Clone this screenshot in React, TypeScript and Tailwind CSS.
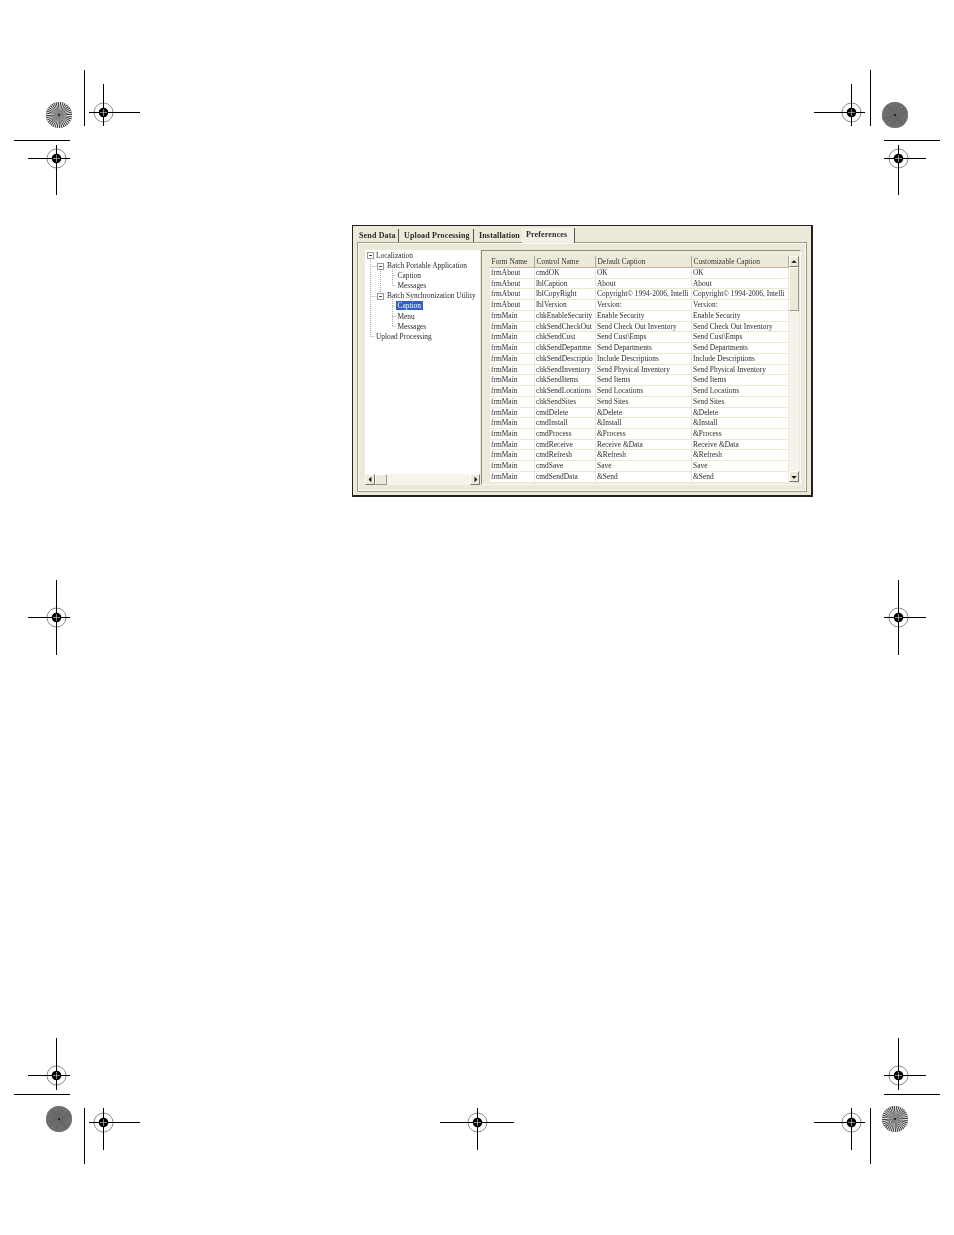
const rows: [string, string, string, string][] = [
  ["frmAbout", "cmdOK", "OK", "OK"],
  ["frmAbout", "lblCaption", "About", "About"],
  ["frmAbout", "lblCopyRight", "Copyright© 1994-2006, Intelli", "Copyright© 1994-2006, Intelli"],
  ["frmAbout", "lblVersion", "Version:", "Version:"],
  ["frmMain", "chkEnableSecurity", "Enable Security", "Enable Security"],
  ["frmMain", "chkSendCheckOut", "Send Check Out Inventory", "Send Check Out Inventory"],
  ["frmMain", "chkSendCust", "Send Cust\\Emps", "Send Cust\\Emps"],
  ["frmMain", "chkSendDepartme", "Send Departments", "Send Departments"],
  ["frmMain", "chkSendDescriptio", "Include Descriptions", "Include Descriptions"],
  ["frmMain", "chkSendInventory", "Send Physical Inventory", "Send Physical Inventory"],
  ["frmMain", "chkSendItems", "Send Items", "Send Items"],
  ["frmMain", "chkSendLocations", "Send Locations", "Send Locations"],
  ["frmMain", "chkSendSites", "Send Sites", "Send Sites"],
  ["frmMain", "cmdDelete", "&Delete", "&Delete"],
  ["frmMain", "cmdInstall", "&Install", "&Install"],
  ["frmMain", "cmdProcess", "&Process", "&Process"],
  ["frmMain", "cmdReceive", "Receive &Data", "Receive &Data"],
  ["frmMain", "cmdRefresh", "&Refresh", "&Refresh"],
  ["frmMain", "cmdSave", "Save", "Save"],
  ["frmMain", "cmdSendData", "&Send", "&Send"],
];

const tree: { label: string; indent: string; selected?: boolean }[] = [
  { label: "Localization", indent: "pl-[11px]" },
  { label: "Batch Portable Application", indent: "pl-[22px]" },
  { label: "Caption", indent: "pl-[32.5px]" },
  { label: "Messages", indent: "pl-[32.5px]" },
  { label: "Batch Synchronization Utility", indent: "pl-[22px]" },
  { label: "Caption", indent: "pl-[30.5px]", selected: true },
  { label: "Menu", indent: "pl-[32.5px]" },
  { label: "Messages", indent: "pl-[32.5px]" },
  { label: "Upload Processing", indent: "pl-[11px]" },
];

function Reg({ x, y, x1, x2, y1, y2 }: { x: number; y: number; x1: number; x2: number; y1: number; y2: number }) {
  return (
    <g>
      <circle cx={x} cy={y} r={9.5} fill="none" stroke="#8a8a8a" strokeWidth={1} />
      <circle cx={x} cy={y} r={4.8} fill="#000" />
      <line x1={x1} x2={x2} y1={y} y2={y} stroke="#000" strokeWidth={1} />
      <line x1={x} x2={x} y1={y1} y2={y2} stroke="#000" strokeWidth={1} />
      <line x1={x - 3.5} x2={x + 3.5} y1={y} y2={y} stroke="#fff" strokeWidth={0.5} />
      <line x1={x} x2={x} y1={y - 3.5} y2={y + 3.5} stroke="#fff" strokeWidth={0.5} />
    </g>
  );
}

function Burst({ x, y, n, bg, wedge }: { x: number; y: number; n: number; bg: string; wedge: string }) {
  const wedges = [];
  for (let i = 0; i < n; i++) {
    const a = (i / n) * Math.PI * 2;
    const b = ((i + 0.5) / n) * Math.PI * 2;
    const pts = `${x},${y} ${x + Math.cos(a) * 13},${y + Math.sin(a) * 13} ${x + Math.cos(b) * 13},${y + Math.sin(b) * 13}`;
    wedges.push(<polygon key={i} points={pts} fill={wedge} />);
  }
  return (
    <g>
      <circle cx={x} cy={y} r={13} fill={bg} />
      {wedges}
      <circle cx={x} cy={y} r={1} fill="#111" />
    </g>
  );
}

function PrintMarks() {
  const crops: [number, number, number, number][] = [
    [84.5, 70, 84.5, 126],
    [14, 140.5, 70, 140.5],
    [870.5, 70, 870.5, 126],
    [884, 140.5, 940, 140.5],
    [14, 1094.5, 70, 1094.5],
    [84.5, 1108, 84.5, 1164],
    [884, 1094.5, 940, 1094.5],
    [870.5, 1108, 870.5, 1164],
  ];
  return (
    <svg className="absolute left-0 top-0" width={954} height={1235} viewBox="0 0 954 1235">
      {crops.map((c, i) => (
        <line key={i} x1={c[0]} y1={c[1]} x2={c[2]} y2={c[3]} stroke="#000" strokeWidth={1} />
      ))}
      <Burst x={59} y={115} n={36} bg="#3a3a3a" wedge="#e4e4e4" />
      <Burst x={895} y={115} n={72} bg="#404040" wedge="#a0a0a0" />
      <Burst x={59} y={1119} n={72} bg="#404040" wedge="#a0a0a0" />
      <Burst x={895} y={1119} n={36} bg="#3a3a3a" wedge="#e4e4e4" />
      <Reg x={103.5} y={112.5} x1={89} x2={140} y1={84} y2={126} />
      <Reg x={56.5} y={158.5} x1={28} x2={70} y1={145} y2={195} />
      <Reg x={851.5} y={112.5} x1={814} x2={865} y1={84} y2={126} />
      <Reg x={898.5} y={158.5} x1={884} x2={926} y1={145} y2={195} />
      <Reg x={56.5} y={617.5} x1={28} x2={70} y1={580} y2={655} />
      <Reg x={898.5} y={617.5} x1={884} x2={926} y1={580} y2={655} />
      <Reg x={56.5} y={1075.5} x1={28} x2={70} y1={1038} y2={1090} />
      <Reg x={898.5} y={1075.5} x1={884} x2={926} y1={1038} y2={1090} />
      <Reg x={103.5} y={1122.5} x1={89} x2={140} y1={1108} y2={1150} />
      <Reg x={851.5} y={1122.5} x1={814} x2={865} y1={1108} y2={1150} />
      <Reg x={477.5} y={1122.5} x1={440} x2={514} y1={1108} y2={1150} />
    </svg>
  );
}

function TreeLines() {
  const dash = { stroke: "#aaa", strokeWidth: 1, strokeDasharray: "1 1" };
  return (
    <svg className="absolute left-0 top-[1px]" width={113} height={100} viewBox="0 0 113 100">
      <line x1={5.5} y1={7} x2={5.5} y2={85.5} {...dash} />
      <line x1={5.5} y1={85.5} x2={10} y2={85.5} {...dash} />
      <line x1={5.5} y1={15.5} x2={12} y2={15.5} {...dash} />
      <line x1={5.5} y1={45.5} x2={12} y2={45.5} {...dash} />
      <line x1={15.5} y1={18} x2={15.5} y2={44} {...dash} />
      <line x1={27.5} y1={18} x2={27.5} y2={34.5} {...dash} />
      <line x1={27.5} y1={24.5} x2={31.5} y2={24.5} {...dash} />
      <line x1={27.5} y1={34.5} x2={31.5} y2={34.5} {...dash} />
      <line x1={27.5} y1={48} x2={27.5} y2={75.5} {...dash} />
      <line x1={27.5} y1={55.5} x2={30} y2={55.5} {...dash} />
      <line x1={27.5} y1={65.5} x2={31.5} y2={65.5} {...dash} />
      <line x1={27.5} y1={75.5} x2={31.5} y2={75.5} {...dash} />
      {[
        [2, 1],
        [12, 12],
        [12, 42],
      ].map(([x, y]) => (
        <g key={`${x}-${y}`}>
          <rect x={x + 0.5} y={y + 0.5} width={6} height={6} fill="#fff" stroke="#999" strokeWidth={1} />
          <line x1={x + 2} x2={x + 5} y1={y + 3.5} y2={y + 3.5} stroke="#444" strokeWidth={1} />
        </g>
      ))}
    </svg>
  );
}

function ScrollBtn({ dir, className }: { dir: "up" | "down" | "left" | "right"; className: string }) {
  const pts = {
    up: "1.5,6 7.5,6 4.5,3",
    down: "1.5,4 7.5,4 4.5,7",
    left: "6,1.5 6,7.5 3,4.5",
    right: "4,1.5 4,7.5 7,4.5",
  }[dir];
  return (
    <div className={`bg-[#ece9d8] border border-t-white border-l-white border-r-[#777] border-b-[#777] flex items-center justify-center shrink-0 ${className}`}>
      <svg width={9} height={9} viewBox="0 0 9 9">
        <polygon points={pts} fill="#000" />
      </svg>
    </div>
  );
}

const track = "bg-[#f6f4ea] bg-[radial-gradient(#d8d5c4_0.6px,transparent_0.7px)] bg-[length:4px_4px]";

export default function App() {
  return (
    <div className="relative w-[954px] h-[1235px] bg-white pt-[225px] pl-[352px] overflow-hidden [font-family:'Liberation_Serif',serif] text-[#2a2a2a]">
      <PrintMarks />
      <div className="relative w-[461px] h-[272px] border border-[#222] border-b-2 border-r-2 bg-[#ece9d8] px-[4px] pt-[1px] flex flex-col">
        <div className="flex h-[15px] items-end text-[8px] font-bold leading-[12px] tracking-[0.15px] shrink-0 whitespace-nowrap">
          <div className="w-[42px] pl-[2px] pt-[1px] h-[13px] border-r border-[#555] blur-[0.3px]">Send Data</div>
          <div className="w-[75px] pl-[5px] pt-[1px] h-[13px] border-r border-[#555] blur-[0.3px]">Upload Processing</div>
          <div className="w-[48px] pl-[5px] pt-[1px] h-[13px] blur-[0.3px]">Installation</div>
          <div className="w-[53px] pl-[4px] pt-[1px] h-[15px] bg-[#f3f1e6] border-r border-[#555] -mb-px z-10 blur-[0.3px]">Preferences</div>
        </div>
        <div className="w-[450px] h-[250px] border border-[#9a9a8c] bg-[#ece9d8] p-[1px] shadow-[inset_0_0_0_1px_#fbfaf5]">
          <div className="flex h-full pl-[6px] pt-[6px] gap-[1px]">
            <div className="relative w-[115px] h-[235px] bg-white flex flex-col shrink-0">
              <TreeLines />
              <div className="flex-1 pt-[1px] text-[7.4px] leading-[10.1px] tracking-[0px] blur-[0.3px]">
                {tree.map((t, i) => (
                  <div key={i} className={`${t.indent} whitespace-nowrap relative`}>
                    {t.selected ? <span className="bg-[#2f5fc0] text-white px-[2px] inline-block leading-[9px]">{t.label}</span> : t.label}
                  </div>
                ))}
              </div>
              <div className={`flex h-[11px] shrink-0 ${track}`}>
                <ScrollBtn dir="left" className="w-[10px]" />
                <div className="w-[12px] bg-[#ece9d8] border border-t-white border-l-white border-r-[#999] border-b-[#999]" />
                <div className="flex-1" />
                <ScrollBtn dir="right" className="w-[10px]" />
              </div>
            </div>
            <div className="w-[320px] h-[235px] border border-[#8f8d80] border-r-[#fbfaf5] border-b-[#fbfaf5] pl-[8px] pt-[5px] flex items-start">
              <div className="w-[299px] h-[226px] bg-white overflow-hidden shrink-0 text-[7.4px] tracking-[0.03px]">
                <div className="grid grid-cols-[45px_61px_96px_97px] h-[12px] bg-[#ece9d8] leading-[11px] border-b border-[#b9b6a6] text-[#333] blur-[0.3px]">
                  {["Form Name", "Control Name", "Default Caption", "Customizable Caption"].map((h) => (
                    <div key={h} className="pl-[1.5px] border-r border-[#aaa89a] whitespace-nowrap overflow-hidden">{h}</div>
                  ))}
                </div>
                {rows.map((r, i) => (
                  <div key={i} className="grid grid-cols-[45px_61px_96px_97px] h-[10.74px] leading-[10px] border-b border-[#ece9d0] blur-[0.3px]">
                    {r.map((c, j) => (
                      <div key={j} className="pl-[1px] border-r border-[#ece9d0] whitespace-nowrap overflow-hidden">{c}</div>
                    ))}
                  </div>
                ))}
              </div>
              <div className={`w-[10px] h-[226px] shrink-0 flex flex-col ${track}`}>
                <ScrollBtn dir="up" className="h-[11px]" />
                <div className="h-[44px] bg-[#ece9d8] border border-t-white border-l-white border-r-[#999] border-b-[#999]" />
                <div className="flex-1" />
                <ScrollBtn dir="down" className="h-[11px]" />
              </div>
            </div>
          </div>
        </div>
      </div>
    </div>
  );
}
